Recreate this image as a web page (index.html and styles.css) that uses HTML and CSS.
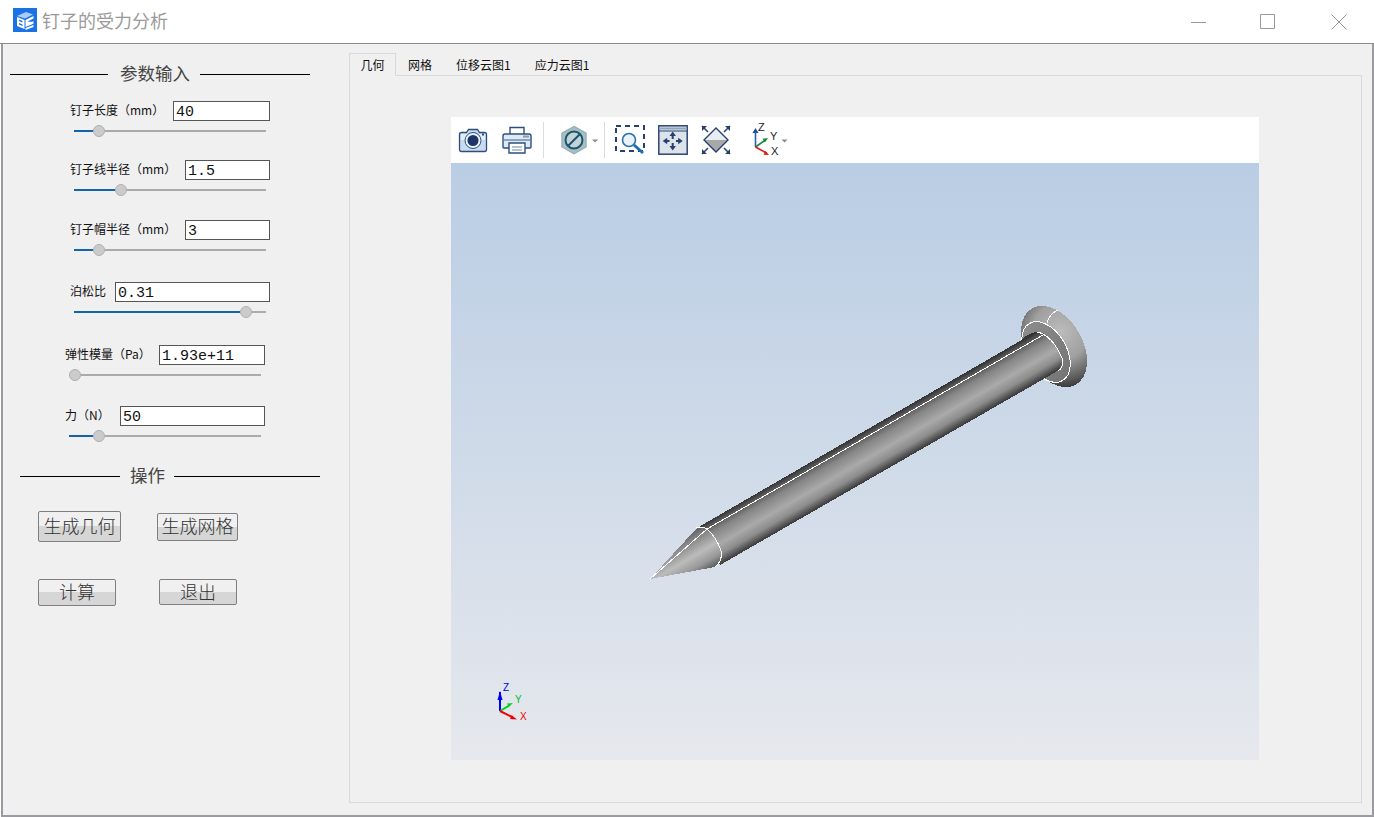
FILE: index.html
```html
<!DOCTYPE html>
<html lang="zh">
<head>
<meta charset="utf-8">
<title>钉子的受力分析</title>
<link rel="stylesheet" href="styles.css">
</head>
<body>
<div class="window">
  <header class="titlebar">
    <svg class="logo" viewBox="0 0 24 24">
      <rect width="24" height="24" fill="#1a72e6"/>
      <path d="M4 8l9-4 7 2.500-8 4z" fill="#a9cdf8"/>
      <path d="M4 9l7.500 3v9L4 18z" fill="#fff"/>
      <path d="M6 11.500l3.500 1.400v1.600L6 13.100zM6 15l3.500 1.400V18L6 16.600z" fill="#1a72e6"/>
      <path d="M12.500 12l8-4v2.600l-6 3 6 .4-8 4zM12.500 16.500l8-3.200v2.400l-8 3.200zM12.500 20l8-3v2l-8 3z" fill="#fff"/>
    </svg>
    <span class="apptitle">钉子的受力分析</span>
    <div class="controls">
      <svg class="ctl" viewBox="0 0 16 16"><path d="M0 8.500h15" /></svg>
      <svg class="ctl ctl-max" viewBox="0 0 16 16"><path d="M.5 .5h14v14h-14z" /></svg>
      <svg class="ctl ctl-close" viewBox="0 0 16 16"><path d="M.5 .5l15 15M15.500 .5l-15 15" /></svg>
    </div>
  </header>
  <main class="body">
    <aside class="side">
      <div class="heading heading-input"><i class="rule r98"></i><span>参数输入</span><i class="rule r110"></i></div>

      <div class="field f1">
        <div class="line"><label>钉子长度（mm）</label><div class="num w97">40</div></div>
        <div class="slider"><b class="fill" style="width:19px"></b><i class="knob"></i><u class="rest"></u></div>
      </div>
      <div class="field f2">
        <div class="line"><label>钉子线半径（mm）</label><div class="num w85">1.5</div></div>
        <div class="slider"><b class="fill" style="width:41px"></b><i class="knob"></i><u class="rest"></u></div>
      </div>
      <div class="field f3">
        <div class="line"><label>钉子帽半径（mm）</label><div class="num w85">3</div></div>
        <div class="slider"><b class="fill" style="width:19px"></b><i class="knob"></i><u class="rest"></u></div>
      </div>
      <div class="field f4">
        <div class="line"><label>泊松比</label><div class="num w155">0.31</div></div>
        <div class="slider"><b class="fill" style="width:166px"></b><i class="knob"></i><u class="rest"></u></div>
      </div>
      <div class="field field-b f5">
        <div class="line"><label>弹性模量（Pa）</label><div class="num w106">1.93e+11</div></div>
        <div class="slider"><b class="fill fill-grey" style="width:0px"></b><i class="knob"></i><u class="rest"></u></div>
      </div>
      <div class="field field-b f6">
        <div class="line"><label>力（N）</label><div class="num w145">50</div></div>
        <div class="slider"><b class="fill" style="width:24px"></b><i class="knob"></i><u class="rest"></u></div>
      </div>

      <div class="heading heading-op"><i class="rule r100"></i><span>操作</span><i class="rule r146"></i></div>

      <div class="btnrow btnrow-1">
        <button class="btn b83">生成几何</button>
        <button class="btn b81">生成网格</button>
      </div>
      <div class="btnrow btnrow-2">
        <button class="btn b78a">计算</button>
        <button class="btn b78b">退出</button>
      </div>
    </aside>

    <section class="tabs">
      <nav class="tabbar">
        <span class="tab active">几何</span>
        <span class="tab">网格</span>
        <span class="tab">位移云图1</span>
        <span class="tab">应力云图1</span>
      </nav>
      <div class="pane">
        <div class="viewer">
          <div class="toolbar">
            <svg class="ic ic-cam" viewBox="0 0 30 30">
              <path d="M1.500 9.500q0-2 2-2h5l2-3h9l2 3h5q2 0 2 2v15q0 2-2 2h-23q-2 0-2-2z" fill="#c9dbee" stroke="#2d4f80" stroke-width="1.300"/>
              <path d="M3 9h24v6H3z" fill="#e3edf7"/>
              <circle cx="15" cy="15.500" r="8" fill="#e9f0f8" stroke="#2d4f80"/>
              <circle cx="15" cy="15.500" r="5.500" fill="#1c3468"/>
              <rect x="24" y="8.500" width="2" height="2" fill="#2d4f80"/>
            </svg>
            <svg class="ic ic-print" viewBox="0 0 30 30">
              <path d="M8 10V2.500h14V10" fill="#fff" stroke="#2d4f80" stroke-width="1.400"/>
              <path d="M1 11q0-2 2-2h24q2 0 2 2v11q0 1-1 1H2q-1 0-1-1z" fill="#dfe9f3" stroke="#2d4f80" stroke-width="1.400"/>
              <path d="M2 14h26v2H2z" fill="#8da4bf"/>
              <rect x="21" y="10.500" width="6" height="2" fill="#8a98a8"/>
              <path d="M7 18h16v10H7z" fill="#fff" stroke="#2d4f80" stroke-width="1.400"/>
              <path d="M10 22h10M10 25h10" stroke="#6c85a3" stroke-width="1.200"/>
            </svg>
            <i class="sep sep-a"></i>
            <svg class="ic-nut" viewBox="0 0 40 30">
              <path d="M15 1.500l12 6.800v13.500l-12 6.800-12-6.800V8.300z" fill="#a9bfc6" stroke="#9ab1b8" stroke-width="1.500"/>
              <circle cx="15" cy="15" r="8.500" fill="#c3d2d6" stroke="#17566c" stroke-width="2"/>
              <path d="M9.500 20.500l11-11" stroke="#17566c" stroke-width="2"/>
              <path d="M33 14.500h6l-3 3z" fill="#8a8a8a"/>
            </svg>
            <i class="sep sep-b"></i>
            <svg class="ic" viewBox="0 0 30 30">
              <path d="M1 1h28v25H1z" fill="none" stroke="#27406e" stroke-width="2" stroke-dasharray="5 4"/>
              <circle cx="14" cy="15" r="6.500" fill="#e9f2fa" stroke="#2f6fa8" stroke-width="1.600"/>
              <path d="M19 20l9 8" stroke="#1f6fb0" stroke-width="3"/>
            </svg>
            <svg class="ic" viewBox="0 0 30 30">
              <rect x=".8" y=".8" width="28.400" height="28.400" fill="#dde3ea" stroke="#2d4670" stroke-width="1.500"/>
              <path d="M1 3.500h28" stroke="#8fa6c0" stroke-width="2"/>
              <path d="M1 6h28" stroke="#2d4670"/>
              <path d="M14.700 11v3M14.700 18v3M8.500 16h3M18 16h3" stroke="#27406e" stroke-width="2"/>
              <path d="M14.700 6.500l-3.200 4.500h6.400zM14.700 25.500l-3.200-4.500h6.400zM4.700 16l4.500-3.200v6.400zM24.700 16l-4.500-3.200v6.400z" fill="#27406e"/>
            </svg>
            <svg class="ic ic-fit" viewBox="0 0 30 30">
              <path d="M15 3l12 12-12 12L3 15z" fill="#e8edf3"/>
              <path d="M3 15h24L15 27z" fill="#a8a8a8"/>
              <path d="M15 3l12 12-12 12L3 15z" fill="none" stroke="#27406e" stroke-width="1.400"/>
              <path d="M1 1l6 6M29 1l-6 6M1 29l6-6M29 29l-6-6" stroke="#27406e" stroke-width="1.500"/>
              <path d="M1 1h5l-5 5zM29 1h-5l5 5zM1 29h5l-5-5zM29 29h-5l5-5z" fill="#27406e"/>
            </svg>
            <svg class="ic-axes" viewBox="0 0 40 30">
              <path d="M6.500 22V7" stroke="#2a60b0" stroke-width="1.600"/>
              <path d="M6.500 3l-3 5h6z" fill="#1e4fa8"/>
              <path d="M6.500 22l10-7" stroke="#15883e" stroke-width="1.600"/>
              <path d="M19 13l-5.500 .8 2.400 3.600z" fill="#15883e"/>
              <path d="M6.500 22l11 6" stroke="#e01818" stroke-width="1.600"/>
              <path d="M20 30l-5.500-.3 2-3.600z" fill="#e01818"/>
              <text x="9" y="6" class="axl">Z</text>
              <text x="21" y="15" class="axl">Y</text>
              <text x="22" y="30" class="axl">X</text>
              <path d="M32.500 14.500h6l-3 3z" fill="#8a8a8a"/>
            </svg>
          </div>
          <div class="scene">
            <svg class="canvas" viewBox="451 163 808 597">
              <defs>
                <linearGradient id="shank" gradientUnits="userSpaceOnUse" x1="850" y1="439.600" x2="871.600" y2="477.100">
                  <stop offset="0" stop-color="#333333"/>
                  <stop offset=".12" stop-color="#5e5e5e"/>
                  <stop offset=".28" stop-color="#868686"/>
                  <stop offset=".58" stop-color="#aaaaaa"/>
                  <stop offset=".8" stop-color="#8c8c8c"/>
                  <stop offset="1" stop-color="#3e3e3e"/>
                </linearGradient>
                <linearGradient id="cone" gradientUnits="userSpaceOnUse" x1="678" y1="530" x2="703" y2="572">
                  <stop offset="0" stop-color="#333"/>
                  <stop offset=".3" stop-color="#808080"/>
                  <stop offset=".62" stop-color="#bcbcbc"/>
                  <stop offset=".85" stop-color="#989898"/>
                  <stop offset="1" stop-color="#666"/>
                </linearGradient>
                <radialGradient id="rim" gradientUnits="userSpaceOnUse" cx="1067" cy="337" r="56">
                  <stop offset="0" stop-color="#bcbcbc"/>
                  <stop offset=".5" stop-color="#a0a0a0"/>
                  <stop offset=".85" stop-color="#5c5c5c"/>
                  <stop offset="1" stop-color="#3a3a3a"/>
                </radialGradient>
                <linearGradient id="face" gradientUnits="userSpaceOnUse" x1="1030" y1="325" x2="1060" y2="385">
                  <stop offset="0" stop-color="#8c8c8c"/>
                  <stop offset="1" stop-color="#747474"/>
                </linearGradient>
              </defs>
              <ellipse class="solid" cx="1054" cy="346.500" rx="28.500" ry="44" transform="rotate(-30 1054 346.500)" fill="url(#rim)"/>
              <ellipse class="solid" cx="1046" cy="352" rx="20.500" ry="33" transform="rotate(-30 1046 352)" fill="url(#face)"/>
              <ellipse cx="1046" cy="352" rx="20.500" ry="33" transform="rotate(-30 1046 352)" class="wire"/>
              <path d="M1047 323q2-9 11-13" class="wire"/>
              <path class="solid" d="M697 528L1020 341Q1030 331 1040 332Q1052 335 1062 358Q1064 368 1054 373L720 565Z" fill="url(#shank)"/>
              <path class="solid" d="M650 579L697 528Q702 526 707 529Q717 538 721 551Q723 561 715 567Z" fill="url(#cone)"/>
              <path d="M650 579L707 529L1043 335" class="wire"/>
              <path d="M1037 332Q1052 335 1062 358Q1064 368 1058 371" class="wire"/>
              <path d="M696 528Q702 526 707 529Q717 538 721 551Q723 561 715 567" class="wire"/>
            </svg>
            <svg class="triad" viewBox="0 0 40 40">
              <path d="M11 29V10" stroke="#0000f0" stroke-width="2"/>
              <path d="M11 9l-2.500 9h5z" fill="#0000f0"/>
              <path d="M11 29l10-6" stroke="#00d020" stroke-width="2"/>
              <path d="M24 21l-6 .5 1.800 3.200z" fill="#00d020"/>
              <path d="M11 29l12 6" stroke="#f00000" stroke-width="2"/>
              <path d="M28 37.500l-7-.5 1.800-3.800z" fill="#f00000"/>
              <text x="14" y="9" class="tz">Z</text>
              <text x="26" y="21" class="ty">Y</text>
              <text x="31" y="38" class="tx">X</text>
            </svg>
          </div>
        </div>
      </div>
    </section>
  </main>
</div>
</body>
</html>
```

FILE: styles.css
```css
* { box-sizing: border-box; }
html, body { margin: 0; height: 100%; background: #fff; }
body { overflow: hidden; font-family: "Noto Sans CJK SC", "Liberation Sans", sans-serif; }

.window {
  height: 817px;
  display: flex;
  flex-direction: column;
}

.titlebar {
  height: 44px;
  flex: none;
  display: flex;
  align-items: center;
  background: #fff;
  border-bottom: 1px solid #8b8b92;
  padding: 0 27px 3px 13px;
}
.logo { width: 24px; height: 24px; flex: none; }
.apptitle { margin-left: 5px; font-size: 18px; color: #9a9a9a; line-height: 24px; }
.controls { margin-left: auto; display: flex; align-items: center; padding-top: 3px; }
.ctl { width: 16px; height: 16px; fill: none; stroke: #999; stroke-width: 1; display: block; }
.ctl-max { margin-left: 53px; }
.ctl-close { margin-left: 55px; }

.body {
  flex: 1;
  display: flex;
  background: #f0f0f0;
  min-height: 0;
  margin-left: 1px;
  border: solid #9a9aa0;
  border-width: 0 2px 2px 2px;
}

.side { width: 346px; flex: none; }

.heading { display: flex; align-items: center; height: 24px; font-size: 17.500px; color: #444; }
.heading-input { margin-top: 18px; padding-left: 7px; }
.heading-op { margin-top: 22px; padding-left: 17px; }
.heading span { margin: 0 10px 0 12px; padding-bottom: 2px; line-height: 24px; white-space: nowrap; }
.heading-op span { margin: 0 9px 0 10px; }
.rule { display: block; height: 1px; background: #000; flex: none; }
.r98 { width: 98px; }
.r110 { width: 110px; }
.r100 { width: 100px; }
.r146 { width: 146px; }

.field { width: 267px; padding-left: 67px; }
.field-b { width: 262px; padding-left: 62px; }
.f1 { margin-top: 15px; }
.f2 { margin-top: 23px; }
.f3 { margin-top: 24px; }
.f4 { margin-top: 26px; }
.f5 { margin-top: 27px; }
.f6 { margin-top: 25px; }

.line { display: flex; align-items: center; height: 20px; }
.line label { font-size: 12px; color: #111; white-space: nowrap; position: relative; top: -2px; }
.num {
  margin-left: auto;
  height: 20px;
  flex: none;
  background: #fff;
  border: 1px solid #555;
  font: 15px/21px "Liberation Mono", "DejaVu Sans Mono", monospace;
  color: #111;
  padding-left: 2px;
}
.w97 { width: 97px; }
.w85 { width: 85px; }
.w155 { width: 155px; }
.w106 { width: 106px; }
.w145 { width: 145px; }

.slider { display: flex; align-items: center; height: 12px; margin-top: 4px; width: 192px; margin-left: 4px; }
.fill { display: block; height: 2px; background: #1464ac; flex: none; }
.fill-grey { background: #aaa; }
.knob { display: block; width: 12px; height: 12px; border-radius: 50%; background: #cbcbcb; border: 1px solid #b0b0b0; flex: none; }
.rest { display: block; flex: 1; height: 2px; background: #ababab; }

.btnrow { display: flex; align-items: center; padding-left: 35px; }
.btnrow-1 { margin-top: 23px; height: 31px; }
.btnrow-2 { margin-top: 36px; height: 28px; }
.btn {
  display: block;
  padding: 0 0 3px;
  font: 300 18px/1 "Noto Sans CJK SC", sans-serif;
  color: #333;
  border: 1px solid #7f7f7f;
  border-radius: 2px;
  background: linear-gradient(#f0f0f0 0, #f0f0f0 50%, #d6d6d6 50%, #d6d6d6 100%);
}
.b83 { width: 83px; height: 31px; }
.b81 { width: 81px; height: 28px; margin-left: 36px; }
.b78a { width: 78px; height: 27px; }
.b78b { width: 78px; height: 26px; margin-left: 43px; }

.tabs { flex: 1; min-width: 0; display: flex; flex-direction: column; padding: 9px 10px 12px 0; }
.tabbar { display: flex; height: 23px; flex: none; position: relative; z-index: 1; }
.tab { font-size: 12px; line-height: 23px; color: #111; padding: 0 12px; white-space: nowrap; }
.tab.active { border: 1px solid #d9d9d9; border-bottom-color: #f0f0f0; background: #f0f0f0; padding: 0 10.500px; line-height: 22px; height: 23px; }
.pane { flex: 1; min-height: 0; margin-top: -1px; border: 1px solid #d9d9d9; padding: 41px 0 42px 101px; }

.viewer { width: 808px; height: 100%; display: flex; flex-direction: column; }
.toolbar { height: 46px; flex: none; background: #fff; display: flex; align-items: center; padding-left: 7px; }
.ic { width: 30px; height: 30px; flex: none; margin-right: 13px; overflow: visible; }
.ic-cam { margin-right: 14px; }
.ic-print { margin-right: 11px; }
.sep { display: block; width: 1px; height: 36px; background: #dcdcdc; flex: none; }
.sep-a { margin-right: 15px; }
.sep-b { margin-right: 10px; }
.ic-nut { width: 40px; height: 30px; flex: none; margin-right: 5px; }
.ic-fit { margin-right: 18px; }
.ic-axes { width: 40px; height: 30px; flex: none; overflow: visible; }
.axl { font: 11px "Liberation Sans", sans-serif; fill: #222; }

.scene {
  flex: 1;
  min-height: 0;
  position: relative;
  background: linear-gradient(#b9cde4, #e6e8ed);
}
.canvas { display: block; width: 808px; height: 597px; }
.solid { shape-rendering: crispEdges; }
.wire { fill: none; stroke: #fff; stroke-width: 1; shape-rendering: crispEdges; }
.triad { position: absolute; left: 38px; bottom: 38px; width: 40px; height: 40px; overflow: visible; }
.tz, .ty, .tx { font: 10px "Liberation Sans", sans-serif; }
.tz { fill: #0000f0; }
.ty { fill: #00c020; }
.tx { fill: #f00000; }
```
